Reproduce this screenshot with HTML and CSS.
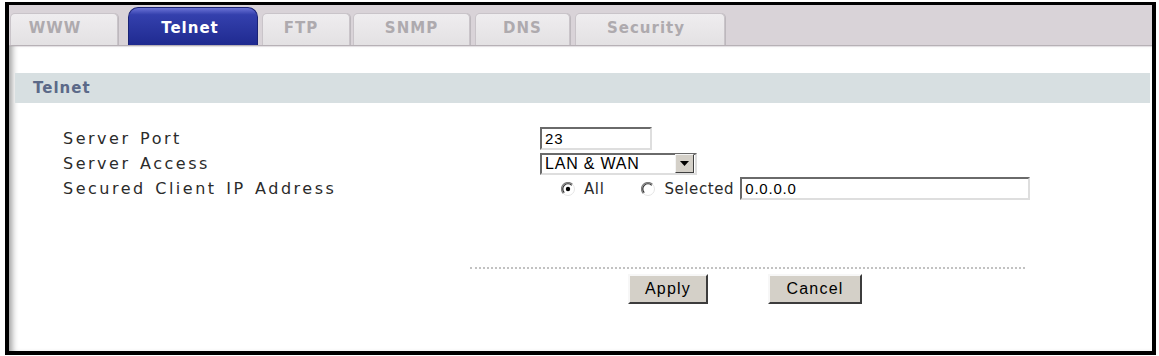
FILE: index.html
```html
<!DOCTYPE HTML>
<html>
    <head>
        <meta charset='utf-8'/>
        <title>Telnet</title>
        <link rel="stylesheet" href="styles.css">
    </head>
    <body>
        <div class="frame">
            <div class="tabs">
                <div class="tab t-www">WWW</div>
                <div class="tab t-telnet active">Telnet</div>
                <div class="tab t-ftp">FTP</div>
                <div class="tab t-snmp">SNMP</div>
                <div class="tab t-dns">DNS</div>
                <div class="tab t-sec">Security</div>
            </div>
            <div class="panel">
                <div class="section">Telnet</div>
                <div class="form">
                    <div class="row">
                        <span class="label">Server Port</span>
                        <div class="ctrl"><span class="field port">23</span></div>
                    </div>
                    <div class="row">
                        <span class="label">Server Access</span>
                        <div class="ctrl">
                            <span class="field select">LAN &amp; WAN<span class="drop"><svg width="9" height="5" viewBox="0 0 9 5"><path d="M0 0h9l-4.5 5z" fill="#000"/></svg></span></span>
                        </div>
                    </div>
                    <div class="row">
                        <span class="label">Secured Client IP Address</span>
                        <div class="ctrl">
                            <span class="opt opt-all">
                                <svg class="radio" width="14" height="14" viewBox="0 0 14 14">
                                    <circle cx="7" cy="7" r="6.5" fill="#fff"/>
                                    <path d="M2.4 11.6A6.5 6.5 0 0 1 11.6 2.4" fill="none" stroke="#7e7e7e" stroke-width="1.3"/>
                                    <path d="M3.3 10.7A5.2 5.2 0 0 1 10.7 3.3" fill="none" stroke="#303030" stroke-width="1.2"/>
                                    <path d="M11.6 2.4A6.5 6.5 0 0 1 2.4 11.6" fill="none" stroke="#e4e4e4" stroke-width="1"/>
                                    <circle cx="7" cy="7" r="2.2" fill="#000"/>
                                </svg>All</span>
                            <span class="opt opt-sel">
                                <svg class="radio" width="14" height="14" viewBox="0 0 14 14">
                                    <circle cx="7" cy="7" r="6.5" fill="#fff"/>
                                    <path d="M2.4 11.6A6.5 6.5 0 0 1 11.6 2.4" fill="none" stroke="#7e7e7e" stroke-width="1.3"/>
                                    <path d="M3.3 10.7A5.2 5.2 0 0 1 10.7 3.3" fill="none" stroke="#303030" stroke-width="1.2"/>
                                    <path d="M11.6 2.4A6.5 6.5 0 0 1 2.4 11.6" fill="none" stroke="#e4e4e4" stroke-width="1"/>
                                </svg>Selected</span>
                            <span class="field ip">0.0.0.0</span>
                        </div>
                    </div>
                </div>
                <div class="actions">
                    <div class="rule"></div>
                    <div class="buttons">
                        <span class="btn apply">Apply</span>
                        <span class="btn cancel">Cancel</span>
                    </div>
                </div>
            </div>
        </div>
    </body>
</html>
```
FILE: styles.css
```css
body{
    margin: 0;
    background: #fff;
    font-family: "DejaVu Sans", Verdana, sans-serif;
}
.frame{
    margin: 2px 3px 1px 5px;
    height: 346px;
    border: 4px solid #000;
    border-top-width: 3px;
    background: #fff;
    overflow: hidden;
}
.tabs{
    display: flex;
    align-items: flex-end;
    height: 40px;
    padding-left: 1px;
    background: #d9d3d8;
    border-bottom: 1px solid #b7b1b6;
    box-shadow: 0 1px 0 #ebe8eb;
}
.tab{
    box-sizing: border-box;
    height: 32px;
    line-height: 29px;
    text-align: center;
    font-size: 15px;
    font-weight: bold;
    letter-spacing: 1px;
    color: #aeaaae;
    background: linear-gradient(#efedef, #e3e1e3);
    border: 1px solid #c9c4c9;
    border-bottom: none;
    border-radius: 5px 5px 0 0;
    box-shadow: 1px 0 0 #bdb8bd;
}
.t-www{ width: 108px; margin-right: 10px; padding-right: 18px; }
.t-telnet{ width: 130px; margin-right: 4px; padding-right: 6px; }
.t-ftp{ width: 88px; margin-right: 3px; padding-right: 10px; }
.t-snmp{ width: 117px; margin-right: 5px; }
.t-dns{ width: 95px; margin-right: 5px; }
.t-sec{ width: 150px; padding-right: 8px; }
.tab.active{
    height: 38px;
    line-height: 41px;
    color: #fff;
    background: linear-gradient(#6b73d6 0, #3440ad 18%, #1f2a90 100%);
    border-color: #1a2275;
    border-radius: 10px 10px 0 0;
    box-shadow: none;
}
.panel{
    padding: 27px 2px 0 6px;
    height: 278px;
    box-shadow: inset 7px 0 6px -4px #9c9c9c;
}
.section{
    height: 30px;
    line-height: 30px;
    padding-left: 18px;
    background: #d7dfe1;
    color: #5b6988;
    font-size: 15px;
    font-weight: bold;
    letter-spacing: 1px;
}
.form{
    margin: 23px 0 0 48px;
}
.row{
    display: flex;
    align-items: center;
    height: 25px;
}
.label{
    width: 477px;
    font-size: 16px;
    letter-spacing: 2.5px;
    word-spacing: 2px;
    color: #2b2b2b;
}
.ctrl{
    display: flex;
    align-items: center;
}
.field{
    display: block;
    box-sizing: border-box;
    height: 23px;
    line-height: 20px;
    padding-left: 3px;
    font-family: "Liberation Sans", Arial, sans-serif;
    font-size: 15px;
    letter-spacing: 0.8px;
    color: #000;
    background: #fff;
    border: 2px solid;
    border-color: #6a6a6a #dedede #dedede #6a6a6a;
}
.port{
    width: 112px;
}
.select{
    display: flex;
    align-items: center;
    justify-content: space-between;
    width: 157px;
    height: 22px;
    padding-right: 1px;
    font-size: 16px;
}
.drop{
    display: flex;
    align-items: center;
    justify-content: center;
    width: 17px;
    height: 17px;
    background: #d4d0c8;
    border: 1px solid;
    border-color: #f4f4f4 #404040 #404040 #f4f4f4;
}
.opt{
    display: flex;
    align-items: center;
    font-size: 15px;
    letter-spacing: 0.6px;
    color: #2b2b2b;
}
.radio{
    margin-right: 9px;
}
.opt-all{
    margin-left: 21px;
    margin-right: 37px;
}
.opt-sel{
    margin-right: 6px;
}
.ip{
    width: 290px;
}
.actions{
    width: 555px;
    margin: 66px 0 0 455px;
}
.rule{
    border-top: 2px dotted #c2c2c2;
}
.buttons{
    display: flex;
    gap: 60px;
    margin-top: 5px;
    padding-left: 158px;
}
.btn{
    box-sizing: border-box;
    height: 30px;
    line-height: 26px;
    text-align: center;
    font-family: "Liberation Sans", Arial, sans-serif;
    font-size: 16px;
    letter-spacing: 1.2px;
    color: #000;
    background: #d4d0c8;
    border: 2px solid;
    border-color: #f7f7f7 #3c3c3c #3c3c3c #f7f7f7;
}
.apply{
    width: 80px;
}
.cancel{
    width: 94px;
}
```
